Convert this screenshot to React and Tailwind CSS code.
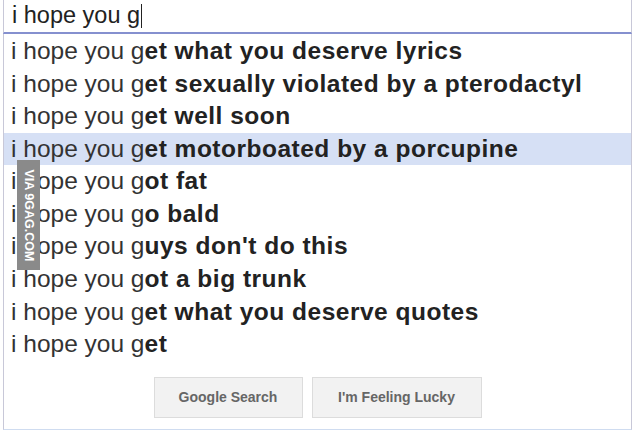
import React from "react";

const rows = [
  ["i hope you g", "et", " what you deserve lyrics"],
  ["i hope you g", "et", " sexually violated by a pterodactyl"],
  ["i hope you g", "et", " well soon"],
  ["i hope you g", "et", " motorboated by a porcupine"],
  ["i hope you g", "ot", " fat"],
  ["i hope you g", "o", " bald"],
  ["i hope you g", "uys", " don't do this"],
  ["i hope you g", "ot", " a big trunk"],
  ["i hope you g", "et", " what you deserve quotes"],
  ["i hope you g", "et", ""],
];

export default function App() {
  return (
    <div
      className="relative w-[635px] h-[430px] bg-white overflow-hidden text-[#222]"
      style={{ fontFamily: '"Liberation Sans", Arial, sans-serif' }}
    >
      {/* search input */}
      <div className="h-[34px] mx-[3px] border-l border-r border-[#c8c8d8] border-b-2 border-b-[#8590cf] flex items-center pl-[8px]">
        <span className="text-[23.5px] leading-none">i hope you g</span>
        <span className="w-px h-[24px] bg-[#222] ml-px" />
      </div>

      {/* suggestions */}
      <div className="mx-[3px] h-[396px] border-l border-r border-[#c8c8d8] border-b border-b-[#cfdcf0] flex flex-col">
        <div className="flex flex-col pt-[1px]">
          {rows.map((r, i) => (
            <div
              key={i}
              className={`h-[32.6px] flex items-center pl-[7px] text-[24.5px] whitespace-nowrap ${
                i === 3 ? "bg-[#d6e0f5]" : ""
              }`}
            >
              <span className="text-[#333]">{r[0]}</span>
              <span className="font-bold tracking-[0.5px]">
                {r[1]}
                {r[2]}
              </span>
            </div>
          ))}
        </div>

        <div className="flex justify-center gap-[9px] mt-[16px]">
          <button className="w-[149px] h-[41px] bg-[#f2f2f2] border border-[#dcdcdc] text-[14px] font-bold text-[#666]">
            Google Search
          </button>
          <button className="w-[170px] h-[41px] bg-[#f2f2f2] border border-[#dcdcdc] text-[14px] font-bold text-[#666]">
            I'm Feeling Lucky
          </button>
        </div>
      </div>

      {/* watermark */}
      <div className="absolute left-[17px] top-[160px] w-[23px] h-[110px] bg-[#8a8a8a] flex items-center justify-center">
        <span className="text-white text-[12.5px] font-bold whitespace-nowrap rotate-90">
          VIA 9GAG.COM
        </span>
      </div>
    </div>
  );
}
